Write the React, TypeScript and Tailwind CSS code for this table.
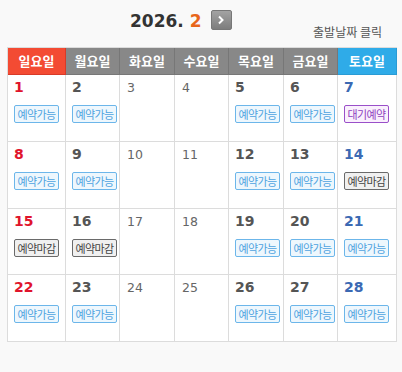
import React from "react";

type Status = "avail" | "wait" | "closed" | null;
type Day = { d: number; s: Status };

const weeks: Day[][] = [
  [
    { d: 1, s: "avail" },
    { d: 2, s: "avail" },
    { d: 3, s: null },
    { d: 4, s: null },
    { d: 5, s: "avail" },
    { d: 6, s: "avail" },
    { d: 7, s: "wait" },
  ],
  [
    { d: 8, s: "avail" },
    { d: 9, s: "avail" },
    { d: 10, s: null },
    { d: 11, s: null },
    { d: 12, s: "avail" },
    { d: 13, s: "avail" },
    { d: 14, s: "closed" },
  ],
  [
    { d: 15, s: "closed" },
    { d: 16, s: "closed" },
    { d: 17, s: null },
    { d: 18, s: null },
    { d: 19, s: "avail" },
    { d: 20, s: "avail" },
    { d: 21, s: "avail" },
  ],
  [
    { d: 22, s: "avail" },
    { d: 23, s: "avail" },
    { d: 24, s: null },
    { d: 25, s: null },
    { d: 26, s: "avail" },
    { d: 27, s: "avail" },
    { d: 28, s: "avail" },
  ],
];

const heads = ["일요일", "월요일", "화요일", "수요일", "목요일", "금요일", "토요일"];
const widths = ["w-[58px]", "w-[54px]", "w-[55px]", "w-[54px]", "w-[55px]", "w-[54px]", "w-[59px]"];

const kr = { fontFamily: '"Noto Sans CJK KR", "Noto Sans", sans-serif' };
const num = { fontFamily: '"DejaVu Sans", Verdana, sans-serif' };

function Badge({ s }: { s: Status }) {
  if (!s) return null;
  const cls =
    s === "avail"
      ? "border-[#6cb6ea] bg-[#eef7fd] text-[#4fa3e0]"
      : s === "wait"
      ? "border-[#9a4fc9] bg-[#faf0fd] text-[#8e3fbf]"
      : "border-[#6a6a6a] bg-[#f0f0f0] text-[#444]";
  const label = s === "avail" ? "예약가능" : s === "wait" ? "대기예약" : "예약마감";
  return (
    <div
      className={`mt-[9px] w-[45px] h-[18px] border rounded-[2px] flex items-center justify-center text-[11px] leading-none tracking-[-0.6px] ${cls}`}
      style={kr}
    >
      {label}
    </div>
  );
}

export default function App() {
  return (
    <div className="w-[402px] h-[372px] bg-[#f9f9f9] px-[7px]">
      <div className="h-[47px] flex">
        <div className="flex items-start pt-[11px] pl-[123px]">
          <span className="text-[17px] font-bold leading-[20px] text-[#333]" style={num}>
            2026. <span className="text-[#e8661b]">2</span>
          </span>
          <div className="ml-[9px] -mt-[1px] w-[21px] h-[20px] rounded-[2px] bg-gradient-to-b from-[#a3a3a3] to-[#7d7d7d] border border-[#777] flex items-center justify-center">
            <svg width="8" height="10" viewBox="0 0 8 10">
              <path d="M2 1.5 L5.5 5 L2 8.5" stroke="#fff" strokeWidth="2" fill="none" />
            </svg>
          </div>
        </div>
        <div className="ml-auto self-end pb-[8px] pr-[13px] text-[12px] leading-[15px] text-[#555]" style={kr}>
          출발날짜 클릭
        </div>
      </div>
      <div className="bg-white border-l border-t border-[#dcdcdc] w-[390px]">
        <div className="flex">
          {heads.map((h, i) => (
            <div
              key={h}
              className={`${widths[i]} h-[27px] flex items-center justify-center text-[13px] font-bold text-white border-r border-b ${
                i === 0
                  ? "bg-[#f34b33] border-[#d83a28]"
                  : i === 6
                  ? "bg-[#2fabe8] border-[#2a9bd4]"
                  : "bg-[#888888] border-[#777]"
              }`}
              style={kr}
            >
              {h}
            </div>
          ))}
        </div>
        {weeks.map((w, wi) => (
          <div key={wi} className="flex">
            {w.map((day, i) => {
              const bold = day.s !== null;
              const color = !bold
                ? "text-[#666]"
                : i === 0
                ? "text-[#e0142c]"
                : i === 6
                ? "text-[#3b69b3]"
                : "text-[#555]";
              return (
                <div
                  key={day.d}
                  className={`${widths[i]} ${wi === 2 ? "h-[66px]" : "h-[67px]"} border-r border-b border-[#dcdcdc] pl-[6px] pt-[4px]`}
                >
                  <div
                    className={`leading-[17px] ${bold ? "text-[14px] font-bold" : "text-[12.5px] pl-px"} ${color}`}
                    style={num}
                  >
                    {day.d}
                  </div>
                  <Badge s={day.s} />
                </div>
              );
            })}
          </div>
        ))}
      </div>
    </div>
  );
}
